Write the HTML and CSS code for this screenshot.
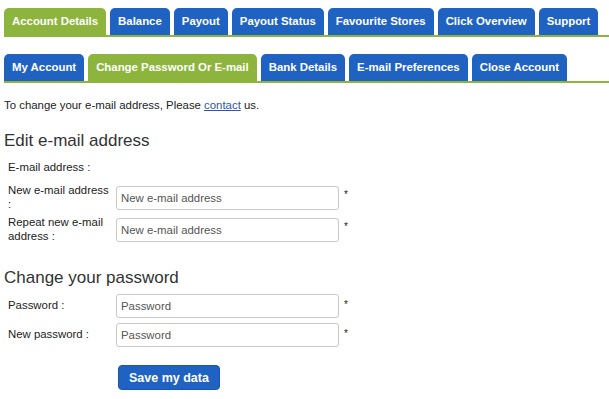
FILE: index.html
```html
<!DOCTYPE html>
<html lang="en">
<head>
  <meta charset="UTF-8" />
  <title>Account Details</title>
  <link rel="stylesheet" href="styles.css">
</head>
<body>
  <div class="tabs main-tabs">
    <a class="tab active">Account Details</a>
    <a class="tab">Balance</a>
    <a class="tab">Payout</a>
    <a class="tab">Payout Status</a>
    <a class="tab">Favourite Stores</a>
    <a class="tab">Click Overview</a>
    <a class="tab">Support</a>
  </div>

  <div class="tabs sub-tabs">
    <a class="tab">My Account</a>
    <a class="tab active">Change Password Or E-mail</a>
    <a class="tab">Bank Details</a>
    <a class="tab">E-mail Preferences</a>
    <a class="tab">Close Account</a>
  </div>

  <div class="content">
    <p class="intro">To change your e-mail address, Please <a href="#">contact</a> us.</p>

    <h2>Edit e-mail address</h2>
    <div class="form">
      <div class="row">
        <label>E-mail address :</label>
      </div>
      <div class="row">
        <label>New e-mail address :</label>
        <input type="text" placeholder="New e-mail address">
        <span class="req">*</span>
      </div>
      <div class="row">
        <label>Repeat new e-mail address :</label>
        <input type="text" placeholder="New e-mail address">
        <span class="req">*</span>
      </div>
    </div>

    <h2>Change your password</h2>
    <div class="form">
      <div class="row">
        <label>Password :</label>
        <input type="password" placeholder="Password">
        <span class="req">*</span>
      </div>
      <div class="row">
        <label>New password :</label>
        <input type="password" placeholder="Password">
        <span class="req">*</span>
      </div>
      <div class="row actions">
        <button class="save">Save my data</button>
      </div>
    </div>
  </div>
</body>
</html>
```

FILE: styles.css
```css
* {
  margin: 0; padding: 0; box-sizing: border-box;
}
body {
  font-family: 'Liberation Sans', Arial, sans-serif;
  font-size: 11.4px;
  color: #222;
  background: #fff;
}

/* Tabs */
.tabs {
  display: flex;
  gap: 4px;
  margin-left: 4px;
  border-bottom: 2px solid #8db43c;
}
.main-tabs {
  margin-top: 8px;
}
.sub-tabs {
  margin-top: 17px;
}
.tab {
  display: block;
  flex: none;
  white-space: nowrap;
  height: 27px;
  line-height: 27px;
  padding: 0 8px;
  background: #1f62c1;
  color: #fff;
  font-weight: bold;
  font-size: 11.4px;
  border-radius: 5px 5px 0 0;
  text-decoration: none;
}
.tab.active {
  background: #8db43c;
}

/* Content */
.content {
  padding: 0 4px;
}
.intro {
  margin-top: 15px;
  margin-bottom: 19px;
  line-height: 14px;
}
.intro a {
  color: #2a55b4;
}
h2 {
  font-size: 17px;
  line-height: 20px;
  font-weight: normal;
  color: #333;
  margin-bottom: 6px;
}
.form {
  display: flex;
  flex-direction: column;
  gap: 5px;
  padding-left: 4px;
  margin-bottom: 25px;
}
.row {
  display: flex;
  align-items: center;
  min-height: 22px;
}
.row label {
  width: 108px;
  flex: none;
  line-height: 13.5px;
  padding-right: 4px;
}
.row input {
  width: 223px;
  height: 24px;
  border: 1px solid #c8c8c8;
  border-radius: 3px;
  padding: 0 4px;
  font-family: inherit;
  font-size: 11.4px;
  color: #333;
}
.row input::placeholder {
  color: #555;
}
.req {
  align-self: flex-start;
  margin-left: 5px;
  margin-top: 5px;
  font-size: 10px;
}
.actions {
  padding-left: 110px;
  margin-top: 13px;
}
.save {
  width: 102px;
  height: 25px;
  background: #1f62c1;
  border: 1px solid #1a56ab;
  border-radius: 4px;
  color: #fff;
  font-family: inherit;
  font-weight: bold;
  font-size: 12.5px;
}
```
